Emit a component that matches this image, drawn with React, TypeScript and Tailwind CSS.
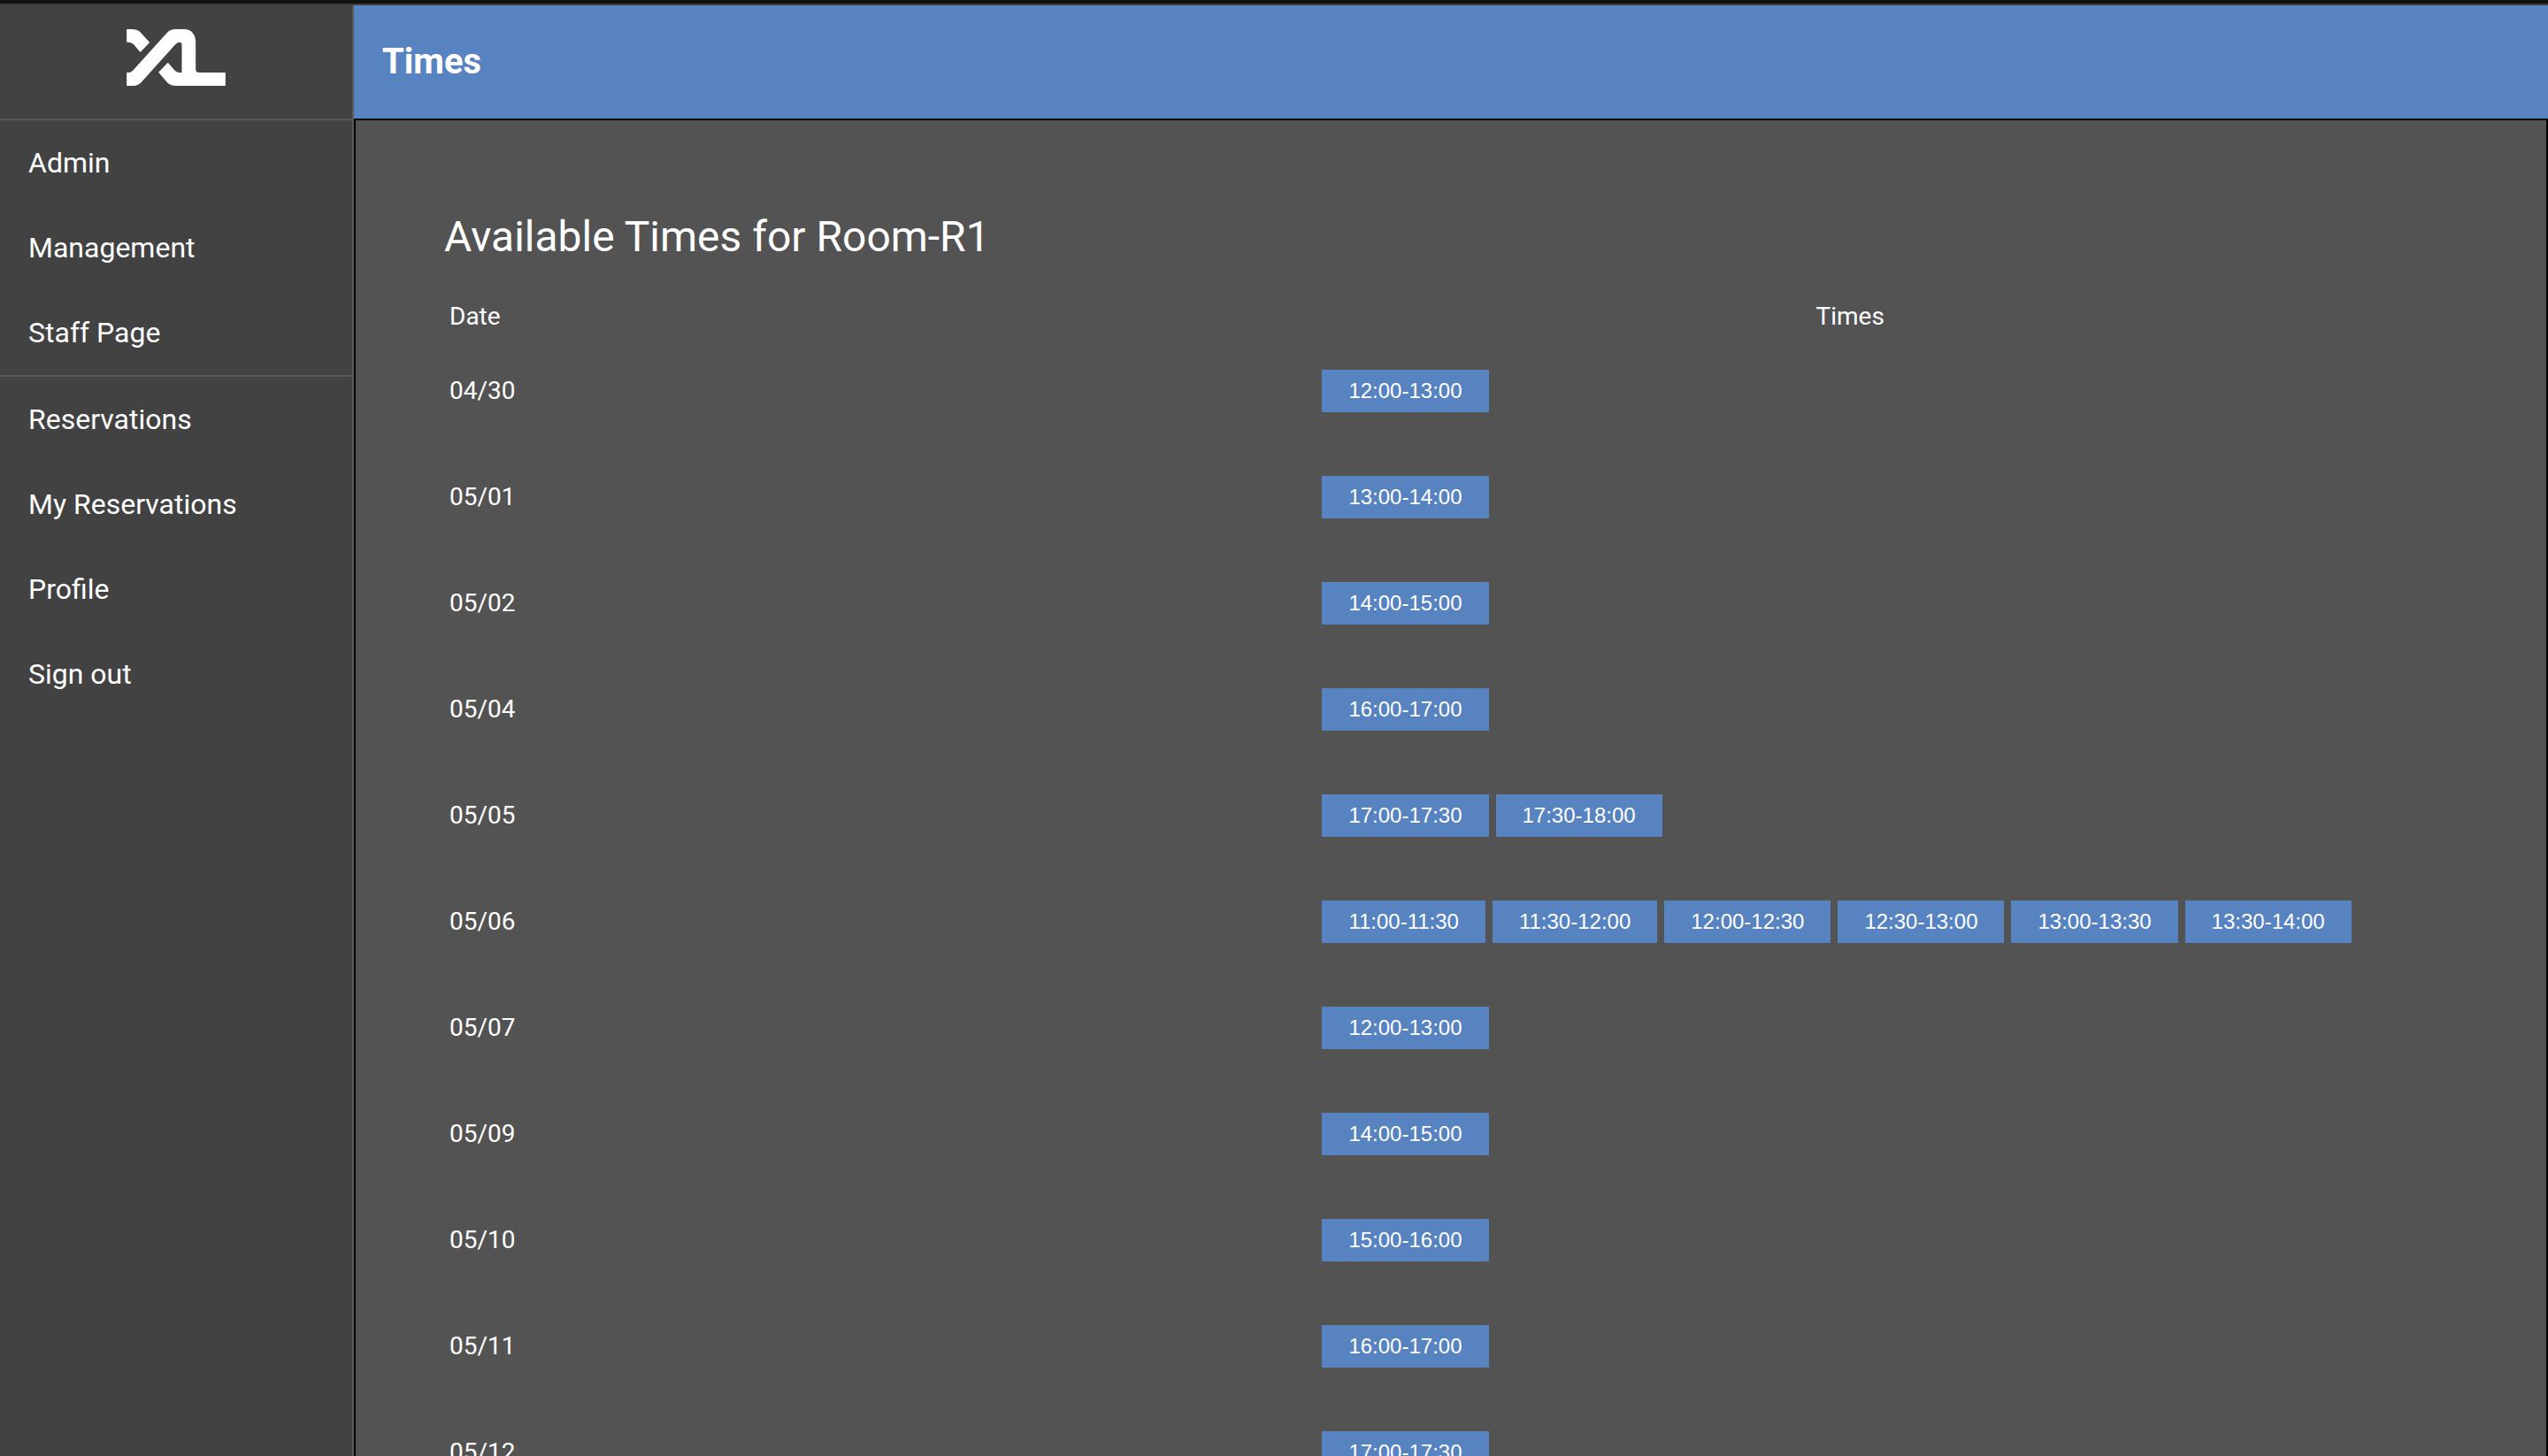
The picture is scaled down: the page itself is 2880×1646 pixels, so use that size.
const staffLinks = ["Admin", "Management", "Staff Page"];
const userLinks = ["Reservations", "My Reservations", "Profile", "Sign out"];

const days: { date: string; times: string[] }[] = [
  { date: "04/30", times: ["12:00-13:00"] },
  { date: "05/01", times: ["13:00-14:00"] },
  { date: "05/02", times: ["14:00-15:00"] },
  { date: "05/04", times: ["16:00-17:00"] },
  { date: "05/05", times: ["17:00-17:30", "17:30-18:00"] },
  {
    date: "05/06",
    times: ["11:00-11:30", "11:30-12:00", "12:00-12:30", "12:30-13:00", "13:00-13:30", "13:30-14:00"],
  },
  { date: "05/07", times: ["12:00-13:00"] },
  { date: "05/09", times: ["14:00-15:00"] },
  { date: "05/10", times: ["15:00-16:00"] },
  { date: "05/11", times: ["16:00-17:00"] },
  { date: "05/12", times: ["17:00-17:30"] },
];

function Logo() {
  return (
    <svg viewBox="69 39 335 192" className="h-16 w-28" fill="white" role="img" aria-label="XL">
      <path d="M69 39H86Q104 39 115 49L147 84L115 117L93 91Q85 83 76 83H69Z" />
      <path d="M69 186H76Q84 186 90 179L204 53Q216 39 234 39H264C288 39 303 57 303 82V174Q303 186 315 186H404V231H236Q217 231 206 219L177 185L209 152L231 178Q238 186 246 186H256V92Q256 83 248 83Q240 83 234 91L124 213Q110 231 91 231H69Z" />
    </svg>
  );
}

function NavGroup({ links }: { links: string[] }) {
  return (
    <ul>
      {links.map((label) => (
        <li key={label}>
          <a href="#" className="flex h-24 items-center px-8 text-[32px] leading-10">
            {label}
          </a>
        </li>
      ))}
    </ul>
  );
}

function Sidebar() {
  return (
    <aside className="w-[400px] shrink-0 border-r-2 border-[#5a5a5a] bg-[#424242]">
      <div className="flex h-[130px] justify-center border-b-2 border-[#5a5a5a] pt-[27px]">
        <Logo />
      </div>
      <nav className="divide-y-2 divide-[#5a5a5a]">
        <NavGroup links={staffLinks} />
        <NavGroup links={userLinks} />
      </nav>
    </aside>
  );
}

function TimesTable() {
  return (
    <table className="w-full table-fixed text-[28px] leading-9">
      <thead>
        <tr className="h-12">
          <th scope="col" className="w-[45%] px-1.5 text-left font-normal">
            Date
          </th>
          <th scope="col" className="px-1.5 text-center font-normal">
            Times
          </th>
        </tr>
      </thead>
      <tbody>
        {days.map((day) => (
          <tr key={day.date} className="h-[120px]">
            <td className="px-1.5">{day.date}</td>
            <td className="px-1.5">
              <div className="flex gap-2">
                {day.times.map((time) => (
                  <button
                    key={time}
                    type="button"
                    className="h-12 bg-[#5783c0] px-[30px] font-['Liberation_Sans',Arial,sans-serif] text-2xl whitespace-nowrap"
                  >
                    {time}
                  </button>
                ))}
              </div>
            </td>
          </tr>
        ))}
      </tbody>
    </table>
  );
}

export default function App() {
  return (
    <div className="flex h-screen flex-col overflow-hidden border-t-4 border-[#111111] bg-[#535353] font-[Roboto,sans-serif] text-white">
      <div className="flex min-h-0 grow border-t-2 border-[#3c3c3c]">
        <Sidebar />
        <div className="flex min-w-0 grow flex-col">
          <header className="flex h-32 shrink-0 items-center bg-[#5783c0] px-8">
            <h1 className="text-[40px] leading-12 font-bold">Times</h1>
          </header>
          <main className="min-h-0 grow overflow-y-auto border-x-2 border-t-2 border-black pt-[102px] pr-[184px] pl-[100px] [scrollbar-width:none]">
            <h2 className="mb-9 text-5xl leading-[60px]">Available Times for Room-R1</h2>
            <TimesTable />
          </main>
        </div>
      </div>
    </div>
  );
}
